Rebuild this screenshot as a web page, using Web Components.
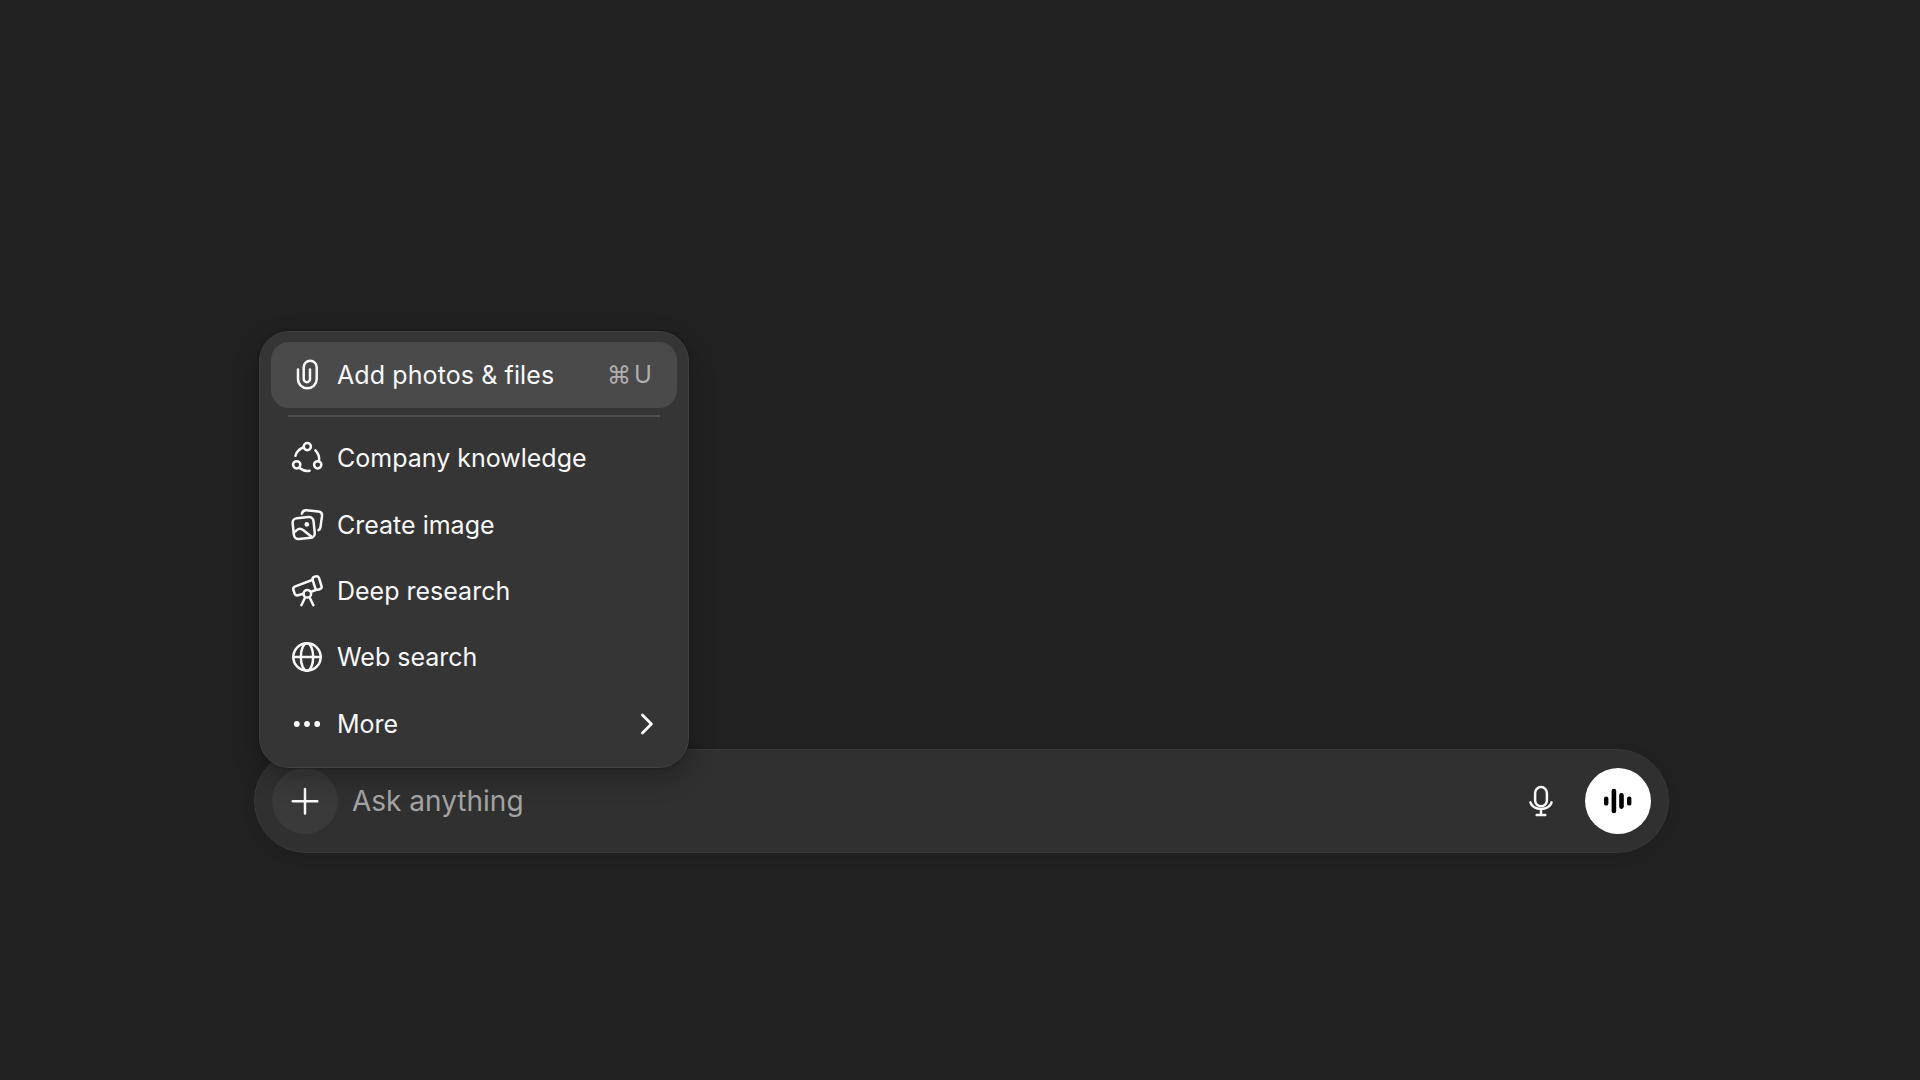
<!DOCTYPE html>
<html lang="en">
<head>
  <meta charset="utf-8">
  <title>Composer menu</title>
  <style>
    body {
      margin: 0;
      min-height: 100vh;
      background: #212121;
      color: #f8f8f8;
      font-family: Inter, "Liberation Sans", sans-serif;
      overflow: hidden;
    }
  </style>
</head>
<body>
  <chat-page>
    <chat-composer placeholder="Ask anything">
      <tools-menu slot="menu">
        <menu-item icon="clip" shortcut="⌘U" active>Add photos &amp; files</menu-item>
        <menu-divider></menu-divider>
        <menu-item icon="knowledge">Company knowledge</menu-item>
        <menu-item icon="image">Create image</menu-item>
        <menu-item icon="telescope">Deep research</menu-item>
        <menu-item icon="globe">Web search</menu-item>
        <menu-item icon="more" submenu>More</menu-item>
      </tools-menu>
    </chat-composer>
  </chat-page>

  <script>
    // Every icon is drawn on a 32x32 grid
    const icons = {
      clip: '<path d="M7 10.4V20a9.35 9.35 0 0 0 18.7 0V8.3a6.5 6.5 0 0 0-13 0V20a3.15 3.15 0 0 0 6.3 0v-9.6"/>',
      knowledge: `
        <circle cx="16.3" cy="4.6" r="3.6"/><circle cx="5.7" cy="22.8" r="3.6"/><circle cx="26.7" cy="22.8" r="3.6"/>
        <path d="M4.4 13.8A13 13 0 0 1 12.7 5.3M24.4 8.3A12.8 12.8 0 0 1 28 19.2M8.9 26.2A12.5 12.5 0 0 0 18.6 28.8"/>`,
      image: `
        <rect x="2.2" y="8.5" width="21" height="21" rx="4.6" transform="rotate(-6 12.7 19)"/>
        <circle cx="15.8" cy="15.4" r="2.3" fill="currentColor" stroke="none"/>
        <path d="M3 23.6l2.5-2.3c2-1.8 4.6-1.8 6.6-.2l8.8 7M10.8 4.7c.7-2.5 2-3.6 4.5-3.4l12 1.3c2.6.3 4 2 3.7 4.6l-1.5 10.8c-.2 1.5-.8 2.6-2 3.2"/>`,
      telescope: `
        <rect x="22.8" y="1.3" width="6.6" height="13.4" rx="2.6" transform="rotate(-17 26.1 8)"/>
        <path d="M21.2 5L4.3 11.4c-1.8.7-2.4 1.8-1.9 3.4l1.2 3.7c.6 1.7 1.7 2.3 3.4 1.8l5.5-1.6M19.9 16.7l4.5-1.4M14.2 22.2l-3.8 8M18.5 22.2l3.9 8"/>
        <circle cx="16.3" cy="18.8" r="3.8"/>`,
      globe: '<circle cx="16" cy="16" r="13.7"/><ellipse cx="16" cy="16" rx="6.2" ry="13.7"/><path d="M2.3 16h27.4"/>',
      more: '<g fill="currentColor" stroke="none"><circle cx="5.8" cy="16" r="2.9"/><circle cx="16" cy="16" r="2.9"/><circle cx="26.2" cy="16" r="2.9"/></g>',
      chevron: '<path d="M11.4 7l9 9-9 9" stroke-width="2.8"/>',
      plus: '<path d="M16 3.9v24.6M3.7 16.2h24.6"/>',
      mic: '<rect x="10.1" y="2.1" width="11.8" height="19.2" rx="5.9"/><path d="M5.4 17.4a10.9 8.6 0 0 0 21.2 0M16 25v5M11.7 30h8.6"/>',
      voice: `<g fill="currentColor" stroke="none">
        <rect x="2" y="11.4" width="4.4" height="9.2" rx="2.2"/><rect x="9.6" y="3.8" width="4.6" height="24.4" rx="2.3"/>
        <rect x="17.2" y="8.1" width="4.6" height="15.8" rx="2.3"/><rect x="25" y="11.4" width="4.4" height="9.2" rx="2.2"/></g>`
    };

    class UiIcon extends HTMLElement {
      constructor() {
        super();
        this.attachShadow({ mode: 'open' });
      }

      connectedCallback() {
        this.shadowRoot.innerHTML = `
          <style>
            :host { display: block; flex: none; width: 32px; height: 32px; }
            svg {
              display: block;
              overflow: visible;
              fill: none;
              stroke: currentColor;
              stroke-width: 2.5;
              stroke-linecap: round;
              stroke-linejoin: round;
            }
          </style>
          <svg width="32" height="32" viewBox="0 0 32 32" aria-hidden="true">${icons[this.getAttribute('name')]}</svg>
        `;
      }
    }

    class MenuItem extends HTMLElement {
      constructor() {
        super();
        this.attachShadow({ mode: 'open' });
      }

      connectedCallback() {
        const shortcut = this.getAttribute('shortcut');
        this.shadowRoot.innerHTML = `
          <style>
            :host {
              display: flex;
              align-items: center;
              box-sizing: border-box;
              height: 66.4px;
              padding: 0 25px 0 20px;
              border-radius: 18px;
              font-size: 25px;
              line-height: 32px;
              cursor: pointer;
            }
            :host([active]) { background: #4a4a4a; letter-spacing: 0.1px; }
            .label { flex: 1; margin-left: 14px; white-space: nowrap; }
            .shortcut { display: flex; gap: 3px; color: #afafaf; font-size: 24px; }
            ui-icon[name="chevron"] { margin-right: -10px; }
          </style>
          <ui-icon name="${this.getAttribute('icon')}"></ui-icon>
          <span class="label"><slot></slot></span>
          ${shortcut ? `<span class="shortcut">${[...shortcut].map(key => `<span>${key}</span>`).join('')}</span>` : ''}
          ${this.hasAttribute('submenu') ? '<ui-icon name="chevron"></ui-icon>' : ''}
        `;
      }
    }

    class MenuDivider extends HTMLElement {
      constructor() {
        super();
        this.attachShadow({ mode: 'open' });
        this.shadowRoot.innerHTML = `
          <style>
            :host { display: block; height: 2px; margin: 6.8px 17px 7.8px; background: #505050; }
          </style>
        `;
      }
    }

    class ToolsMenu extends HTMLElement {
      constructor() {
        super();
        this.attachShadow({ mode: 'open' });
        this.shadowRoot.innerHTML = `
          <style>
            :host {
              display: block;
              box-sizing: border-box;
              width: 430px;
              padding: 10px 11px;
              border: 1px solid #404040;
              border-radius: 30px;
              background: #353535;
              box-shadow: 0 10px 26px rgba(0, 0, 0, 0.27), 0 0 3px rgba(0, 0, 0, 0.3);
            }
            ::slotted(menu-item[submenu]) { padding-right: 24px; }
          </style>
          <slot></slot>
        `;
      }
    }

    class ChatComposer extends HTMLElement {
      constructor() {
        super();
        this.attachShadow({ mode: 'open' });
      }

      connectedCallback() {
        this.shadowRoot.innerHTML = `
          <style>
            :host {
              position: relative;
              display: flex;
              align-items: center;
              box-sizing: border-box;
              width: 1415px;
              height: 104px;
              padding: 0 17px;
              border: 1px solid #383838;
              border-radius: 52px;
              background: #303030;
              box-shadow: 0 4px 14px rgba(0, 0, 0, 0.08);
            }
            button {
              display: grid;
              place-items: center;
              flex: none;
              width: 66px;
              height: 66px;
              padding: 0;
              border: 0;
              border-radius: 50%;
              background: none;
              color: #f8f8f8;
            }
            .add { background: #3a3a3a; }
            .voice { margin-left: 11px; background: #fff; color: #000; }
            .prompt { flex: 1; margin-left: 14px; color: #a3a3a3; font-size: 28px; line-height: 36px; }
            /* The menu floats over the composer's top edge */
            .menu { position: absolute; left: 4px; bottom: 84px; }
          </style>
          <button class="add" aria-label="Add"><ui-icon name="plus"></ui-icon></button>
          <span class="prompt">${this.getAttribute('placeholder')}</span>
          <button aria-label="Dictate"><ui-icon name="mic"></ui-icon></button>
          <button class="voice" aria-label="Voice mode"><ui-icon name="voice"></ui-icon></button>
          <div class="menu"><slot name="menu"></slot></div>
        `;
      }
    }

    class ChatPage extends HTMLElement {
      constructor() {
        super();
        this.attachShadow({ mode: 'open' });
        this.shadowRoot.innerHTML = `
          <style>
            :host {
              display: flex;
              align-items: flex-end;
              box-sizing: border-box;
              height: 1080px;
              padding: 0 250px 227px 254px;
            }
          </style>
          <slot></slot>
        `;
      }
    }

    customElements.define('ui-icon', UiIcon);
    customElements.define('menu-item', MenuItem);
    customElements.define('menu-divider', MenuDivider);
    customElements.define('tools-menu', ToolsMenu);
    customElements.define('chat-composer', ChatComposer);
    customElements.define('chat-page', ChatPage);
  </script>
</body>
</html>
